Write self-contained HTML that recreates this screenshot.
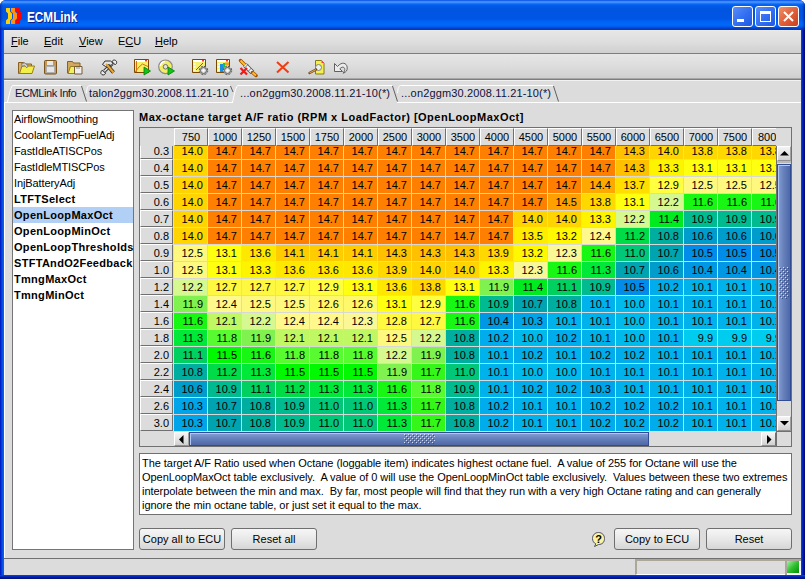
<!DOCTYPE html>
<html><head><meta charset="utf-8">
<style>
*{margin:0;padding:0;box-sizing:border-box}
html,body{width:805px;height:579px;overflow:hidden;background:#fff}
body{position:relative;font-family:"Liberation Sans",sans-serif;font-size:11px;color:#000}
.a{position:absolute}
#frame{position:absolute;left:0;top:0;width:805px;height:579px;background:#0a3fd0;border-radius:6px 6px 0 0;overflow:hidden}
#title{position:absolute;left:0;top:0;width:805px;height:30px;
 background:linear-gradient(#0040d8 0px,#2c80ff 1px,#4a9aff 2px,#2f82ff 3px,#0a68f5 4px,#005ae8 6px,#0054e0 10px,#0056e5 19px,#0064f6 22px,#0068fa 25px,#0058e8 27px,#0040d0 28px,#0038c0 30px)}
#ttext{position:absolute;left:27px;top:9px;font-weight:bold;font-size:14px;color:#fff;text-shadow:1px 1px 0 #0a1e8a;transform:scaleX(0.84);transform-origin:0 0;white-space:nowrap}
.wb{position:absolute;top:6px;width:21px;height:21px;border:1px solid #fff;border-radius:3px;
 background:linear-gradient(135deg,#5a8ef8 0%,#3470f2 50%,#1f58e4 100%)}
#client{position:absolute;left:4px;top:30px;width:797px;height:545px;background:#dcdcdc}
#menubar{position:absolute;left:0;top:0;width:797px;height:24px;background:linear-gradient(#f0ede8 0px,#e6e6e6 1px,#dedede 12px,#cfcfcf 23px,#7d7d7d 23px)}
.mi{position:absolute;top:5px;font-size:11px;line-height:13px}
.mi u{text-decoration:underline;text-underline-offset:1px}
#toolbar{position:absolute;left:0;top:24px;width:797px;height:26px;background:linear-gradient(#e6e6e6 0px,#dddddd 12px,#cfcfcf 24px,#7d7d7d 25px)}
.ic{position:absolute}
#tabs{position:absolute;left:0;top:50px;width:797px;height:23px;background:#dcdcdc}
.tab{position:absolute;top:0;height:23px;white-space:nowrap;font-size:11px}
.list{position:absolute;left:8px;top:80px;width:122px;height:440px;border:1px solid #808080;background:#fff}
.li{position:absolute;left:1px;height:16px;width:120px;line-height:16px;padding-left:1px;white-space:nowrap;letter-spacing:-0.1px}
.li.b{font-weight:bold;letter-spacing:0.3px}
.c{position:absolute;width:33px;height:16px;text-align:right;padding-right:4px;line-height:16px;padding-top:0px;font-size:11px}
.rh{position:absolute;left:140px;width:33px;height:17px;background:#dcdcdc;border-top:1px solid #fff;border-left:1px solid #fff;border-bottom:1px solid #707070;border-right:1px solid #707070;text-align:right;padding-right:3px;line-height:16px}
.ch{position:absolute;top:128px;width:34px;height:18px;background:#dcdcdc;border-top:1px solid #fff;border-left:1px solid #fff;border-bottom:1px solid #707070;border-right:1px solid #707070;text-align:center;line-height:16px}
.tt{line-height:13px;white-space:nowrap;color:#10103a}
.sbb{background:linear-gradient(#f4f4f4,#e0e0e0 60%,#d0d0d0);border-top:1px solid #fff;border-left:1px solid #fff;border-right:1px solid #a0a0a0;border-bottom:1px solid #909090}
.vthumb{background:linear-gradient(90deg,#86a0d4,#6a84be 40%,#4e68a8);border:1px solid #304c94;box-shadow:inset 1px 1px 0 #b0c8f8}
.hthumb{background:linear-gradient(#86a0d4,#6a84be 40%,#4e68a8);border:1px solid #304c94;box-shadow:inset 1px 1px 0 #b0c8f8}
.btn{position:absolute;height:22px;border:1px solid #6f6f6f;border-radius:3px;background:linear-gradient(#f6f6f6,#e8e8e8 50%,#d6d6d6);text-align:center;line-height:20px;font-size:11px;white-space:nowrap}
</style></head><body>
<div id="frame">
 <div id="title">
  <div class="a" style="left:0;top:0;width:4px;height:30px;background:linear-gradient(90deg,rgba(0,0,100,.55),rgba(0,0,100,.25) 1px,rgba(0,0,100,0) 3px)"></div>
  <div class="a" style="left:801px;top:0;width:4px;height:30px;background:linear-gradient(270deg,rgba(0,0,100,.6),rgba(0,0,100,.3) 1px,rgba(0,0,100,0) 3px)"></div>
  <svg class="a" style="left:6px;top:8px" width="17" height="16" viewBox="0 0 17 16"><path d="M0 0h4v3.5l2 2v5l-2 2V16h-4v-3.5l2-2v-5l-2-2z" fill="#ffd000"/><path d="M5 0h4v3.5l2 2v5l-2 2V16h-4v-3.5l2-2v-5l-2-2z" fill="#ff9010"/><path d="M10 0h4v3.5l2 2v5l-2 2V16h-4v-3.5l2-2v-5l-2-2z" fill="#ff0000"/></svg>
  <div id="ttext">ECMLink</div>
  <div class="wb" style="left:732px"><div class="a" style="left:4px;top:12px;width:7px;height:3px;background:#fff"></div></div>
  <div class="wb" style="left:755px"><div class="a" style="left:4px;top:4px;width:11px;height:11px;border:1px solid #fff;border-top-width:3px"></div></div>
  <div class="wb" style="left:778px;background:linear-gradient(135deg,#f0906a 0%,#e0603a 50%,#c8401e 100%)">
   <svg class="a" style="left:4px;top:4px" width="11" height="11" viewBox="0 0 11 11"><path d="M1 1L10 10M10 1L1 10" stroke="#fff" stroke-width="2"/></svg>
  </div>
 </div>
 <div class="a" style="left:0;top:30px;width:4px;height:549px;background:linear-gradient(90deg,#0010b8,#0030d0 1px,#0048e0 2px,#0a5cf2 3px)"></div>
 <div class="a" style="left:801px;top:30px;width:4px;height:549px;background:linear-gradient(90deg,#0846f0,#0032d4 1px,#0018a8 2px,#000a80 3px)"></div>
 <div class="a" style="left:0;top:575px;width:805px;height:4px;background:linear-gradient(#0846ec,#0032d0 1px,#0020b0 2px,#00107e 3px)"></div>
 <div id="client">
  <div id="menubar">
   <div class="mi" style="left:7px"><u>F</u>ile</div>
   <div class="mi" style="left:40px"><u>E</u>dit</div>
   <div class="mi" style="left:75px"><u>V</u>iew</div>
   <div class="mi" style="left:114px">E<u>C</u>U</div>
   <div class="mi" style="left:151px"><u>H</u>elp</div>
  </div>
  <div id="toolbar">
  </div>
<svg class="a" style="left:-4px;top:24px" width="805" height="25" viewBox="0 54 805 25">
 <g stroke-linejoin="round">
 <!-- 1 open folder -->
 <path d="M18.5 62.5h5l1 1.5h7v9.5h-13z" fill="#d8b070" stroke="#8a6020"/>
 <path d="M19.5 73.5L22 66H34.5L32 73.5z" fill="#f2f048" stroke="#9a7a20"/>
 <path d="M21.5 63.5L25 62.8L28.2 66L26.8 67.8L24.3 65.5L22.3 66.5z" fill="#d0d0d0" stroke="#6a6a6a" stroke-width=".8"/>
 <!-- 2 floppy -->
 <rect x="44.5" y="60.5" width="12" height="13.5" rx="1" fill="#c89858" stroke="#7a5418"/>
 <rect x="47" y="61" width="6" height="4" fill="#e8e8e8"/>
 <rect x="46.5" y="66.5" width="8" height="6" fill="#e6e6e6" stroke="#b0b0b0"/>
 <!-- 3 folder+floppy -->
 <path d="M67.5 61.5h5l1 1.5h6.5v10h-12.5z" fill="#d0a860" stroke="#8a6020"/>
 <path d="M68 73.5L70.5 66.5H79L77 73.5z" fill="#f0f060" stroke="#9a7a20"/>
 <rect x="74.5" y="66.5" width="7.5" height="7.5" fill="#eeeeee" stroke="#7a5a30"/>
 <rect x="76" y="67" width="4" height="2" fill="#c0c0c0"/>
 <!-- 4 tools -->
 <path d="M104.5 71L112.5 63.5" stroke="#303030" stroke-width="3.4"/>
 <path d="M104.5 71L112.5 63.5" stroke="#ececec" stroke-width="1.6"/>
 <path d="M102 70.5a2.4 2.4 0 1 0 3.6 2.2l-1.4-.4l-.8-1.4z" fill="#ececec" stroke="#303030"/>
 <path d="M115.5 64.5a2.4 2.4 0 1 0 -3.6 -2.2l1.4.4l.8 1.4z" fill="#ececec" stroke="#303030"/>
 <path d="M107.5 65.5L113.5 72.5" stroke="#4a3008" stroke-width="3.6"/>
 <path d="M107.5 65.5L113.5 72.5" stroke="#e8a838" stroke-width="2"/>
 <path d="M102.5 64.5L105 61H110.5L113 63.2L111 65.5L108.5 64.5L105.5 66.5z" fill="#e4e4e4" stroke="#303030"/>
 <path d="M106 64L108.5 66.5" stroke="#e0a030" stroke-width="2"/>
 <!-- 5 chart play -->
 <rect x="134.5" y="59.5" width="14" height="13" fill="#f6f060" stroke="#7a4800"/>
 <rect x="135" y="60" width="13" height="2" fill="#fff"/>
 <rect x="145" y="60" width="2" height="1.5" fill="#ff3030"/>
 <path d="M136.5 61v11M135 72L139 67L142.5 64L148 66.5" stroke="#d87010" fill="none"/>
 <path d="M144 67L150.5 71L144 75z" fill="#10c418" stroke="#0a7a0a" stroke-width=".8"/>
 <!-- 6 cd play -->
 <circle cx="165.5" cy="66.8" r="6.8" fill="#f2ee60" stroke="#8a8a8a" stroke-width="1.2"/>
 <path d="M160.5 66A5 5 0 0 1 165 61.5" stroke="#ffffff" stroke-width="1.5" fill="none"/>
 <circle cx="165.5" cy="66.8" r="2.3" fill="#e0e0e0" stroke="#707070"/>
 <path d="M168 67L174.5 71L168 75z" fill="#10c418" stroke="#0a7a0a" stroke-width=".8"/>
 <!-- 7 chart gear -->
 <rect x="192.5" y="59.5" width="13" height="13" fill="#f6f070" stroke="#7a4800"/>
 <rect x="193" y="60" width="12" height="2" fill="#fff"/>
 <rect x="202" y="60" width="2" height="1.5" fill="#ff3030"/>
 <path d="M193.5 64h2M193.5 67h2M193.5 70h2" stroke="#fff" stroke-width="1.5"/>
 <path d="M196 70L199 67L203 63" stroke="#ff2020" fill="none"/>
 <circle cx="203.5" cy="70.5" r="4.2" fill="#c8c8c8" stroke="#505050" stroke-dasharray="2 1.3"/>
 <circle cx="203.5" cy="70.5" r="3" fill="#d8d8d8" stroke="#606060"/>
 <circle cx="203.5" cy="70.5" r="1.2" fill="#fff"/>
 <!-- 8 color chart gear -->
 <rect x="216.5" y="59.5" width="13" height="13" fill="#f6f070" stroke="#7a4800"/>
 <rect x="217" y="60" width="12" height="2" fill="#fff"/>
 <rect x="226" y="60" width="2" height="1.5" fill="#ff3030"/>
 <path d="M217.5 64h2M217.5 67h2M217.5 70h2" stroke="#fff" stroke-width="1.5"/>
 <rect x="220" y="64" width="3" height="8" fill="#1890e0"/>
 <rect x="223" y="63" width="2" height="7" fill="#20c040"/>
 <rect x="225" y="62.5" width="4" height="3" fill="#f0a020"/>
 <circle cx="227.5" cy="70.5" r="4.2" fill="#c8c8c8" stroke="#505050" stroke-dasharray="2 1.3"/>
 <circle cx="227.5" cy="70.5" r="3" fill="#d8d8d8" stroke="#606060"/>
 <circle cx="227.5" cy="70.5" r="1.2" fill="#fff"/>
 <!-- 9 cable -->
 <path d="M240.5 60.5L245 65" stroke="#a05000" stroke-width="3.5" stroke-linecap="round"/>
 <path d="M240.5 60.5L245 65" stroke="#ffc020" stroke-width="2"/>
 <path d="M245 65L252.5 72.5" stroke="#505050" stroke-width="5"/>
 <path d="M245 65L252.5 72.5" stroke="#f4f4f4" stroke-width="3.2"/>
 <path d="M248 64.5L244.5 68M251.5 68L248 71.5" stroke="#707070" stroke-width="1"/>
 <path d="M252.5 72.5L256 75.5" stroke="#a05000" stroke-width="3.5" stroke-linecap="round"/>
 <path d="M252.5 72.5L256 75.5" stroke="#ffc020" stroke-width="2"/>
 <path d="M240.5 68L247 74.5M247 68L240.5 74.5" stroke="#f01818" stroke-width="2.2"/>
 <!-- 10 red X -->
 <path d="M277 62L288.5 72.5M288.5 62L277 72.5" stroke="#f03c10" stroke-width="2"/>
 <!-- 11 doc magnifier -->
 <path d="M315.5 60.5h6l2.5 2.5v11h-8.5z" fill="#f4f050" stroke="#8a7a10"/>
 <path d="M321.5 60.5l2.5 2.5h-2.5z" fill="#ff4040"/>
 <circle cx="318.5" cy="67.5" r="3" fill="#e8f0f0" stroke="#808080"/>
 <path d="M316 69.5L309.5 73" stroke="#704010" stroke-width="2.4" stroke-linecap="round"/>
 <path d="M316 69.5L309.5 73" stroke="#d8a050" stroke-width="1.2"/>
 <!-- 12 undo -->
 <path d="M334.5 63.5V71.5H342.5L339.8 68.8C341.5 66.8 343.8 66.5 344.6 68.3C345.3 70 344.3 71.8 343 73.2C346 72.6 347.6 70.2 347.2 67.2C346.6 63 342 61.2 337.5 66.5z" fill="#ececec" stroke="#606060"/>
 </g>
</svg>
  <div id="tabs">
  </div>
 </div>
<!-- tabs -->
 <div class="a" style="left:4px;top:80px;width:797px;height:1px;background:#f2f2f2"></div>
 <svg class="a" style="left:0;top:80px" width="805" height="24" viewBox="0 80 805 24" fill="none">
  <path d="M4 102.5H233M397 102.5H801" stroke="#fff"/>
  <path d="M7.5 102C9 96 10 89 12.5 85.5H81" stroke="#fff"/>
  <path d="M81.5 86L86.5 101.5" stroke="#606060"/>
  <path d="M86.5 93C87 88 87.5 86 89.5 85.5H230" stroke="#fff"/>
  <path d="M230.5 86L233 92" stroke="#606060"/>
  <path d="M232.5 102.5C234 96 235 89 237.5 85.5H392" stroke="#fff"/>
  <path d="M392.5 86L397.5 101.5" stroke="#606060"/>
  <path d="M397.5 93C398 88 398.5 86 400.5 85.5H553" stroke="#fff"/>
  <path d="M553.5 86L558.5 101.5" stroke="#606060"/>
 </svg>
 <div class="a tt" style="left:15px;top:87px;letter-spacing:-0.4px">ECMLink Info</div>
 <div class="a tt" style="left:89px;top:87px;letter-spacing:0.12px">talon2ggm30.2008.11.21-10</div>
 <div class="a tt" style="left:240px;top:87px;letter-spacing:0.15px">...on2ggm30.2008.11.21-10(*)</div>
 <div class="a tt" style="left:401px;top:87px;letter-spacing:0.15px">...on2ggm30.2008.11.21-10(*)</div>
 <!-- content, absolute page coords -->
 <div class="a" style="left:4px;top:103px;width:797px;height:455px;background:#dcdcdc"></div>
 <div class="a" style="left:4px;top:102px;width:1px;height:456px;background:#fff"></div>
 <div class="a" style="left:12px;top:110px;width:122px;height:440px;border:1px solid #757575;background:#fff"></div>
 <div class="a" style="left:12px;top:111px;width:121px">
  <div class="li" style="top:0">AirflowSmoothing</div>
  <div class="li" style="top:16px">CoolantTempFuelAdj</div>
  <div class="li" style="top:32px">FastIdleATISCPos</div>
  <div class="li" style="top:48px">FastIdleMTISCPos</div>
  <div class="li" style="top:64px">InjBatteryAdj</div>
  <div class="li b" style="top:80px">LTFTSelect</div>
  <div class="li b" style="top:96px;background:#b2d0f6">OpenLoopMaxOct</div>
  <div class="li b" style="top:112px">OpenLoopMinOct</div>
  <div class="li b" style="top:128px">OpenLoopThresholds</div>
  <div class="li b" style="top:144px">STFTAndO2Feedback</div>
  <div class="li b" style="top:160px">TmngMaxOct</div>
  <div class="li b" style="top:176px">TmngMinOct</div>
 </div>
 <div class="a" style="left:139px;top:111px;font-weight:bold;letter-spacing:0.5px;white-space:nowrap">Max-octane target A/F ratio (RPM x LoadFactor) [OpenLoopMaxOct]</div>
 <!-- grid -->
 <div class="a" style="left:139px;top:127px;width:653px;height:320px;border:1px solid #707070;background:#dcdcdc"></div>
 <div class="a" style="left:140px;top:146px;width:1px;height:285px;background:#fff"></div>
 <div class="a" style="left:174px;top:146px;width:602px;height:285px;background:#d8d8d8;overflow:hidden">
  <div class="a" style="left:-174px;top:-146px;width:805px;height:579px">
<div class="c" style="left:174px;top:143px;background:#ffd400">14.0</div>
<div class="c" style="left:208px;top:143px;background:#ff8000">14.7</div>
<div class="c" style="left:242px;top:143px;background:#ff8000">14.7</div>
<div class="c" style="left:276px;top:143px;background:#ff8000">14.7</div>
<div class="c" style="left:310px;top:143px;background:#ff8000">14.7</div>
<div class="c" style="left:344px;top:143px;background:#ff8000">14.7</div>
<div class="c" style="left:378px;top:143px;background:#ff8000">14.7</div>
<div class="c" style="left:412px;top:143px;background:#ff8000">14.7</div>
<div class="c" style="left:446px;top:143px;background:#ff8000">14.7</div>
<div class="c" style="left:480px;top:143px;background:#ff8000">14.7</div>
<div class="c" style="left:514px;top:143px;background:#ff8000">14.7</div>
<div class="c" style="left:548px;top:143px;background:#ff8000">14.7</div>
<div class="c" style="left:582px;top:143px;background:#ff8000">14.7</div>
<div class="c" style="left:616px;top:143px;background:#ffc000">14.3</div>
<div class="c" style="left:650px;top:143px;background:#ffd400">14.0</div>
<div class="c" style="left:684px;top:143px;background:#ffd800">13.8</div>
<div class="c" style="left:718px;top:143px;background:#ffd800">13.8</div>
<div class="c" style="left:752px;top:143px;background:#ffd800">13.8</div>
<div class="c" style="left:174px;top:160px;background:#ffd400">14.0</div>
<div class="c" style="left:208px;top:160px;background:#ff8000">14.7</div>
<div class="c" style="left:242px;top:160px;background:#ff8000">14.7</div>
<div class="c" style="left:276px;top:160px;background:#ff8000">14.7</div>
<div class="c" style="left:310px;top:160px;background:#ff8000">14.7</div>
<div class="c" style="left:344px;top:160px;background:#ff8000">14.7</div>
<div class="c" style="left:378px;top:160px;background:#ff8000">14.7</div>
<div class="c" style="left:412px;top:160px;background:#ff8000">14.7</div>
<div class="c" style="left:446px;top:160px;background:#ff8000">14.7</div>
<div class="c" style="left:480px;top:160px;background:#ff8000">14.7</div>
<div class="c" style="left:514px;top:160px;background:#ff8000">14.7</div>
<div class="c" style="left:548px;top:160px;background:#ff8000">14.7</div>
<div class="c" style="left:582px;top:160px;background:#ff8000">14.7</div>
<div class="c" style="left:616px;top:160px;background:#ffc000">14.3</div>
<div class="c" style="left:650px;top:160px;background:#fff400">13.3</div>
<div class="c" style="left:684px;top:160px;background:#ffff10">13.1</div>
<div class="c" style="left:718px;top:160px;background:#ffff10">13.1</div>
<div class="c" style="left:752px;top:160px;background:#ffff10">13.1</div>
<div class="c" style="left:174px;top:177px;background:#ffd400">14.0</div>
<div class="c" style="left:208px;top:177px;background:#ff8000">14.7</div>
<div class="c" style="left:242px;top:177px;background:#ff8000">14.7</div>
<div class="c" style="left:276px;top:177px;background:#ff8000">14.7</div>
<div class="c" style="left:310px;top:177px;background:#ff8000">14.7</div>
<div class="c" style="left:344px;top:177px;background:#ff8000">14.7</div>
<div class="c" style="left:378px;top:177px;background:#ff8000">14.7</div>
<div class="c" style="left:412px;top:177px;background:#ff8000">14.7</div>
<div class="c" style="left:446px;top:177px;background:#ff8000">14.7</div>
<div class="c" style="left:480px;top:177px;background:#ff8000">14.7</div>
<div class="c" style="left:514px;top:177px;background:#ff8000">14.7</div>
<div class="c" style="left:548px;top:177px;background:#ff8000">14.7</div>
<div class="c" style="left:582px;top:177px;background:#ffa800">14.4</div>
<div class="c" style="left:616px;top:177px;background:#ffde00">13.7</div>
<div class="c" style="left:650px;top:177px;background:#ffff40">12.9</div>
<div class="c" style="left:684px;top:177px;background:#fff87e">12.5</div>
<div class="c" style="left:718px;top:177px;background:#fff87e">12.5</div>
<div class="c" style="left:752px;top:177px;background:#fff87e">12.5</div>
<div class="c" style="left:174px;top:194px;background:#ffd400">14.0</div>
<div class="c" style="left:208px;top:194px;background:#ff8000">14.7</div>
<div class="c" style="left:242px;top:194px;background:#ff8000">14.7</div>
<div class="c" style="left:276px;top:194px;background:#ff8000">14.7</div>
<div class="c" style="left:310px;top:194px;background:#ff8000">14.7</div>
<div class="c" style="left:344px;top:194px;background:#ff8000">14.7</div>
<div class="c" style="left:378px;top:194px;background:#ff8000">14.7</div>
<div class="c" style="left:412px;top:194px;background:#ff8000">14.7</div>
<div class="c" style="left:446px;top:194px;background:#ff8000">14.7</div>
<div class="c" style="left:480px;top:194px;background:#ff8000">14.7</div>
<div class="c" style="left:514px;top:194px;background:#ff8000">14.7</div>
<div class="c" style="left:548px;top:194px;background:#ffa000">14.5</div>
<div class="c" style="left:582px;top:194px;background:#ffd800">13.8</div>
<div class="c" style="left:616px;top:194px;background:#ffff10">13.1</div>
<div class="c" style="left:650px;top:194px;background:#d6f890">12.2</div>
<div class="c" style="left:684px;top:194px;background:#18f614">11.6</div>
<div class="c" style="left:718px;top:194px;background:#18f614">11.6</div>
<div class="c" style="left:752px;top:194px;background:#18f614">11.6</div>
<div class="c" style="left:174px;top:211px;background:#ffd400">14.0</div>
<div class="c" style="left:208px;top:211px;background:#ff8000">14.7</div>
<div class="c" style="left:242px;top:211px;background:#ff8000">14.7</div>
<div class="c" style="left:276px;top:211px;background:#ff8000">14.7</div>
<div class="c" style="left:310px;top:211px;background:#ff8000">14.7</div>
<div class="c" style="left:344px;top:211px;background:#ff8000">14.7</div>
<div class="c" style="left:378px;top:211px;background:#ff8000">14.7</div>
<div class="c" style="left:412px;top:211px;background:#ff8000">14.7</div>
<div class="c" style="left:446px;top:211px;background:#ff8000">14.7</div>
<div class="c" style="left:480px;top:211px;background:#ff8000">14.7</div>
<div class="c" style="left:514px;top:211px;background:#ffd400">14.0</div>
<div class="c" style="left:548px;top:211px;background:#ffd400">14.0</div>
<div class="c" style="left:582px;top:211px;background:#fff400">13.3</div>
<div class="c" style="left:616px;top:211px;background:#d6f890">12.2</div>
<div class="c" style="left:650px;top:211px;background:#00ea20">11.4</div>
<div class="c" style="left:684px;top:211px;background:#00ba90">10.9</div>
<div class="c" style="left:718px;top:211px;background:#00ba90">10.9</div>
<div class="c" style="left:752px;top:211px;background:#00ba90">10.9</div>
<div class="c" style="left:174px;top:228px;background:#ffd400">14.0</div>
<div class="c" style="left:208px;top:228px;background:#ff8000">14.7</div>
<div class="c" style="left:242px;top:228px;background:#ff8000">14.7</div>
<div class="c" style="left:276px;top:228px;background:#ff8000">14.7</div>
<div class="c" style="left:310px;top:228px;background:#ff8000">14.7</div>
<div class="c" style="left:344px;top:228px;background:#ff8000">14.7</div>
<div class="c" style="left:378px;top:228px;background:#ff8000">14.7</div>
<div class="c" style="left:412px;top:228px;background:#ff8000">14.7</div>
<div class="c" style="left:446px;top:228px;background:#ff8000">14.7</div>
<div class="c" style="left:480px;top:228px;background:#ff8000">14.7</div>
<div class="c" style="left:514px;top:228px;background:#ffec00">13.5</div>
<div class="c" style="left:548px;top:228px;background:#fff800">13.2</div>
<div class="c" style="left:582px;top:228px;background:#fff88c">12.4</div>
<div class="c" style="left:616px;top:228px;background:#00dc48">11.2</div>
<div class="c" style="left:650px;top:228px;background:#00aea0">10.8</div>
<div class="c" style="left:684px;top:228px;background:#009ccc">10.6</div>
<div class="c" style="left:718px;top:228px;background:#009ccc">10.6</div>
<div class="c" style="left:752px;top:228px;background:#009ccc">10.6</div>
<div class="c" style="left:174px;top:245px;background:#fff87e">12.5</div>
<div class="c" style="left:208px;top:245px;background:#ffff10">13.1</div>
<div class="c" style="left:242px;top:245px;background:#ffe800">13.6</div>
<div class="c" style="left:276px;top:245px;background:#ffcc00">14.1</div>
<div class="c" style="left:310px;top:245px;background:#ffcc00">14.1</div>
<div class="c" style="left:344px;top:245px;background:#ffcc00">14.1</div>
<div class="c" style="left:378px;top:245px;background:#ffc000">14.3</div>
<div class="c" style="left:412px;top:245px;background:#ffc000">14.3</div>
<div class="c" style="left:446px;top:245px;background:#ffc000">14.3</div>
<div class="c" style="left:480px;top:245px;background:#ffd800">13.9</div>
<div class="c" style="left:514px;top:245px;background:#fff800">13.2</div>
<div class="c" style="left:548px;top:245px;background:#faf896">12.3</div>
<div class="c" style="left:582px;top:245px;background:#18f614">11.6</div>
<div class="c" style="left:616px;top:245px;background:#00c878">11.0</div>
<div class="c" style="left:650px;top:245px;background:#00a4b0">10.7</div>
<div class="c" style="left:684px;top:245px;background:#008ce8">10.5</div>
<div class="c" style="left:718px;top:245px;background:#008ce8">10.5</div>
<div class="c" style="left:752px;top:245px;background:#008ce8">10.5</div>
<div class="c" style="left:174px;top:262px;background:#fff87e">12.5</div>
<div class="c" style="left:208px;top:262px;background:#ffff10">13.1</div>
<div class="c" style="left:242px;top:262px;background:#fff400">13.3</div>
<div class="c" style="left:276px;top:262px;background:#ffe800">13.6</div>
<div class="c" style="left:310px;top:262px;background:#ffe800">13.6</div>
<div class="c" style="left:344px;top:262px;background:#ffe800">13.6</div>
<div class="c" style="left:378px;top:262px;background:#ffd800">13.9</div>
<div class="c" style="left:412px;top:262px;background:#ffd400">14.0</div>
<div class="c" style="left:446px;top:262px;background:#ffd400">14.0</div>
<div class="c" style="left:480px;top:262px;background:#fff400">13.3</div>
<div class="c" style="left:514px;top:262px;background:#faf896">12.3</div>
<div class="c" style="left:548px;top:262px;background:#18f614">11.6</div>
<div class="c" style="left:582px;top:262px;background:#00e838">11.3</div>
<div class="c" style="left:616px;top:262px;background:#00a4b0">10.7</div>
<div class="c" style="left:650px;top:262px;background:#009ccc">10.6</div>
<div class="c" style="left:684px;top:262px;background:#0098e4">10.4</div>
<div class="c" style="left:718px;top:262px;background:#0098e4">10.4</div>
<div class="c" style="left:752px;top:262px;background:#0098e4">10.4</div>
<div class="c" style="left:174px;top:279px;background:#d6f890">12.2</div>
<div class="c" style="left:208px;top:279px;background:#fff840">12.7</div>
<div class="c" style="left:242px;top:279px;background:#fff840">12.7</div>
<div class="c" style="left:276px;top:279px;background:#fff840">12.7</div>
<div class="c" style="left:310px;top:279px;background:#ffff40">12.9</div>
<div class="c" style="left:344px;top:279px;background:#ffff10">13.1</div>
<div class="c" style="left:378px;top:279px;background:#ffe800">13.6</div>
<div class="c" style="left:412px;top:279px;background:#ffd800">13.8</div>
<div class="c" style="left:446px;top:279px;background:#ffff10">13.1</div>
<div class="c" style="left:480px;top:279px;background:#80f250">11.9</div>
<div class="c" style="left:514px;top:279px;background:#00ea20">11.4</div>
<div class="c" style="left:548px;top:279px;background:#00d060">11.1</div>
<div class="c" style="left:582px;top:279px;background:#00ba90">10.9</div>
<div class="c" style="left:616px;top:279px;background:#008ce8">10.5</div>
<div class="c" style="left:650px;top:279px;background:#00acec">10.2</div>
<div class="c" style="left:684px;top:279px;background:#00b2ec">10.1</div>
<div class="c" style="left:718px;top:279px;background:#00b2ec">10.1</div>
<div class="c" style="left:752px;top:279px;background:#00b2ec">10.1</div>
<div class="c" style="left:174px;top:296px;background:#80f250">11.9</div>
<div class="c" style="left:208px;top:296px;background:#fff88c">12.4</div>
<div class="c" style="left:242px;top:296px;background:#fff87e">12.5</div>
<div class="c" style="left:276px;top:296px;background:#fff87e">12.5</div>
<div class="c" style="left:310px;top:296px;background:#fff86a">12.6</div>
<div class="c" style="left:344px;top:296px;background:#fff86a">12.6</div>
<div class="c" style="left:378px;top:296px;background:#ffff10">13.1</div>
<div class="c" style="left:412px;top:296px;background:#ffff40">12.9</div>
<div class="c" style="left:446px;top:296px;background:#18f614">11.6</div>
<div class="c" style="left:480px;top:296px;background:#00ba90">10.9</div>
<div class="c" style="left:514px;top:296px;background:#00a4b0">10.7</div>
<div class="c" style="left:548px;top:296px;background:#00aea0">10.8</div>
<div class="c" style="left:582px;top:296px;background:#00b2ec">10.1</div>
<div class="c" style="left:616px;top:296px;background:#00baec">10.0</div>
<div class="c" style="left:650px;top:296px;background:#00b2ec">10.1</div>
<div class="c" style="left:684px;top:296px;background:#00b2ec">10.1</div>
<div class="c" style="left:718px;top:296px;background:#00b2ec">10.1</div>
<div class="c" style="left:752px;top:296px;background:#00b2ec">10.1</div>
<div class="c" style="left:174px;top:313px;background:#18f614">11.6</div>
<div class="c" style="left:208px;top:313px;background:#c0f864">12.1</div>
<div class="c" style="left:242px;top:313px;background:#d6f890">12.2</div>
<div class="c" style="left:276px;top:313px;background:#fff88c">12.4</div>
<div class="c" style="left:310px;top:313px;background:#fff88c">12.4</div>
<div class="c" style="left:344px;top:313px;background:#faf896">12.3</div>
<div class="c" style="left:378px;top:313px;background:#fffa40">12.8</div>
<div class="c" style="left:412px;top:313px;background:#fff840">12.7</div>
<div class="c" style="left:446px;top:313px;background:#18f614">11.6</div>
<div class="c" style="left:480px;top:313px;background:#0098e4">10.4</div>
<div class="c" style="left:514px;top:313px;background:#00a4e8">10.3</div>
<div class="c" style="left:548px;top:313px;background:#00b2ec">10.1</div>
<div class="c" style="left:582px;top:313px;background:#00b2ec">10.1</div>
<div class="c" style="left:616px;top:313px;background:#00baec">10.0</div>
<div class="c" style="left:650px;top:313px;background:#00b2ec">10.1</div>
<div class="c" style="left:684px;top:313px;background:#00b2ec">10.1</div>
<div class="c" style="left:718px;top:313px;background:#00b2ec">10.1</div>
<div class="c" style="left:752px;top:313px;background:#00b2ec">10.1</div>
<div class="c" style="left:174px;top:330px;background:#00e838">11.3</div>
<div class="c" style="left:208px;top:330px;background:#58fa30">11.8</div>
<div class="c" style="left:242px;top:330px;background:#80f250">11.9</div>
<div class="c" style="left:276px;top:330px;background:#c0f864">12.1</div>
<div class="c" style="left:310px;top:330px;background:#c0f864">12.1</div>
<div class="c" style="left:344px;top:330px;background:#c0f864">12.1</div>
<div class="c" style="left:378px;top:330px;background:#fff87e">12.5</div>
<div class="c" style="left:412px;top:330px;background:#d6f890">12.2</div>
<div class="c" style="left:446px;top:330px;background:#00aea0">10.8</div>
<div class="c" style="left:480px;top:330px;background:#00acec">10.2</div>
<div class="c" style="left:514px;top:330px;background:#00baec">10.0</div>
<div class="c" style="left:548px;top:330px;background:#00acec">10.2</div>
<div class="c" style="left:582px;top:330px;background:#00b2ec">10.1</div>
<div class="c" style="left:616px;top:330px;background:#00baec">10.0</div>
<div class="c" style="left:650px;top:330px;background:#00b2ec">10.1</div>
<div class="c" style="left:684px;top:330px;background:#00ccf0">9.9</div>
<div class="c" style="left:718px;top:330px;background:#00ccf0">9.9</div>
<div class="c" style="left:752px;top:330px;background:#00ccf0">9.9</div>
<div class="c" style="left:174px;top:347px;background:#00d060">11.1</div>
<div class="c" style="left:208px;top:347px;background:#00f800">11.5</div>
<div class="c" style="left:242px;top:347px;background:#18f614">11.6</div>
<div class="c" style="left:276px;top:347px;background:#58fa30">11.8</div>
<div class="c" style="left:310px;top:347px;background:#58fa30">11.8</div>
<div class="c" style="left:344px;top:347px;background:#58fa30">11.8</div>
<div class="c" style="left:378px;top:347px;background:#d6f890">12.2</div>
<div class="c" style="left:412px;top:347px;background:#80f250">11.9</div>
<div class="c" style="left:446px;top:347px;background:#00aea0">10.8</div>
<div class="c" style="left:480px;top:347px;background:#00b2ec">10.1</div>
<div class="c" style="left:514px;top:347px;background:#00acec">10.2</div>
<div class="c" style="left:548px;top:347px;background:#00b2ec">10.1</div>
<div class="c" style="left:582px;top:347px;background:#00acec">10.2</div>
<div class="c" style="left:616px;top:347px;background:#00acec">10.2</div>
<div class="c" style="left:650px;top:347px;background:#00b2ec">10.1</div>
<div class="c" style="left:684px;top:347px;background:#00b2ec">10.1</div>
<div class="c" style="left:718px;top:347px;background:#00b2ec">10.1</div>
<div class="c" style="left:752px;top:347px;background:#00b2ec">10.1</div>
<div class="c" style="left:174px;top:364px;background:#00aea0">10.8</div>
<div class="c" style="left:208px;top:364px;background:#00dc48">11.2</div>
<div class="c" style="left:242px;top:364px;background:#00e838">11.3</div>
<div class="c" style="left:276px;top:364px;background:#00f800">11.5</div>
<div class="c" style="left:310px;top:364px;background:#00f800">11.5</div>
<div class="c" style="left:344px;top:364px;background:#00f800">11.5</div>
<div class="c" style="left:378px;top:364px;background:#80f250">11.9</div>
<div class="c" style="left:412px;top:364px;background:#34f618">11.7</div>
<div class="c" style="left:446px;top:364px;background:#00c878">11.0</div>
<div class="c" style="left:480px;top:364px;background:#00b2ec">10.1</div>
<div class="c" style="left:514px;top:364px;background:#00baec">10.0</div>
<div class="c" style="left:548px;top:364px;background:#00baec">10.0</div>
<div class="c" style="left:582px;top:364px;background:#00b2ec">10.1</div>
<div class="c" style="left:616px;top:364px;background:#00b2ec">10.1</div>
<div class="c" style="left:650px;top:364px;background:#00b2ec">10.1</div>
<div class="c" style="left:684px;top:364px;background:#00b2ec">10.1</div>
<div class="c" style="left:718px;top:364px;background:#00b2ec">10.1</div>
<div class="c" style="left:752px;top:364px;background:#00b2ec">10.1</div>
<div class="c" style="left:174px;top:381px;background:#009ccc">10.6</div>
<div class="c" style="left:208px;top:381px;background:#00ba90">10.9</div>
<div class="c" style="left:242px;top:381px;background:#00d060">11.1</div>
<div class="c" style="left:276px;top:381px;background:#00dc48">11.2</div>
<div class="c" style="left:310px;top:381px;background:#00e838">11.3</div>
<div class="c" style="left:344px;top:381px;background:#00e838">11.3</div>
<div class="c" style="left:378px;top:381px;background:#18f614">11.6</div>
<div class="c" style="left:412px;top:381px;background:#58fa30">11.8</div>
<div class="c" style="left:446px;top:381px;background:#00ba90">10.9</div>
<div class="c" style="left:480px;top:381px;background:#00b2ec">10.1</div>
<div class="c" style="left:514px;top:381px;background:#00acec">10.2</div>
<div class="c" style="left:548px;top:381px;background:#00acec">10.2</div>
<div class="c" style="left:582px;top:381px;background:#00a4e8">10.3</div>
<div class="c" style="left:616px;top:381px;background:#00b2ec">10.1</div>
<div class="c" style="left:650px;top:381px;background:#00b2ec">10.1</div>
<div class="c" style="left:684px;top:381px;background:#00b2ec">10.1</div>
<div class="c" style="left:718px;top:381px;background:#00b2ec">10.1</div>
<div class="c" style="left:752px;top:381px;background:#00b2ec">10.1</div>
<div class="c" style="left:174px;top:398px;background:#00a4e8">10.3</div>
<div class="c" style="left:208px;top:398px;background:#00a4b0">10.7</div>
<div class="c" style="left:242px;top:398px;background:#00aea0">10.8</div>
<div class="c" style="left:276px;top:398px;background:#00ba90">10.9</div>
<div class="c" style="left:310px;top:398px;background:#00c878">11.0</div>
<div class="c" style="left:344px;top:398px;background:#00c878">11.0</div>
<div class="c" style="left:378px;top:398px;background:#00e838">11.3</div>
<div class="c" style="left:412px;top:398px;background:#34f618">11.7</div>
<div class="c" style="left:446px;top:398px;background:#00aea0">10.8</div>
<div class="c" style="left:480px;top:398px;background:#00acec">10.2</div>
<div class="c" style="left:514px;top:398px;background:#00b2ec">10.1</div>
<div class="c" style="left:548px;top:398px;background:#00b2ec">10.1</div>
<div class="c" style="left:582px;top:398px;background:#00acec">10.2</div>
<div class="c" style="left:616px;top:398px;background:#00acec">10.2</div>
<div class="c" style="left:650px;top:398px;background:#00acec">10.2</div>
<div class="c" style="left:684px;top:398px;background:#00b2ec">10.1</div>
<div class="c" style="left:718px;top:398px;background:#00b2ec">10.1</div>
<div class="c" style="left:752px;top:398px;background:#00b2ec">10.1</div>
<div class="c" style="left:174px;top:415px;background:#00a4e8">10.3</div>
<div class="c" style="left:208px;top:415px;background:#00a4b0">10.7</div>
<div class="c" style="left:242px;top:415px;background:#00aea0">10.8</div>
<div class="c" style="left:276px;top:415px;background:#00ba90">10.9</div>
<div class="c" style="left:310px;top:415px;background:#00c878">11.0</div>
<div class="c" style="left:344px;top:415px;background:#00c878">11.0</div>
<div class="c" style="left:378px;top:415px;background:#00e838">11.3</div>
<div class="c" style="left:412px;top:415px;background:#34f618">11.7</div>
<div class="c" style="left:446px;top:415px;background:#00aea0">10.8</div>
<div class="c" style="left:480px;top:415px;background:#00acec">10.2</div>
<div class="c" style="left:514px;top:415px;background:#00b2ec">10.1</div>
<div class="c" style="left:548px;top:415px;background:#00b2ec">10.1</div>
<div class="c" style="left:582px;top:415px;background:#00acec">10.2</div>
<div class="c" style="left:616px;top:415px;background:#00acec">10.2</div>
<div class="c" style="left:650px;top:415px;background:#00acec">10.2</div>
<div class="c" style="left:684px;top:415px;background:#00b2ec">10.1</div>
<div class="c" style="left:718px;top:415px;background:#00b2ec">10.1</div>
<div class="c" style="left:752px;top:415px;background:#00b2ec">10.1</div>
  </div>
 </div>
 <div class="a" style="left:140px;top:146px;width:34px;height:285px;overflow:hidden">
  <div class="a" style="left:-140px;top:-146px;width:805px;height:579px">
<div class="rh" style="top:142px">0.3</div>
<div class="rh" style="top:159px">0.4</div>
<div class="rh" style="top:176px">0.5</div>
<div class="rh" style="top:193px">0.6</div>
<div class="rh" style="top:210px">0.7</div>
<div class="rh" style="top:227px">0.8</div>
<div class="rh" style="top:244px">0.9</div>
<div class="rh" style="top:261px">1.0</div>
<div class="rh" style="top:278px">1.2</div>
<div class="rh" style="top:295px">1.4</div>
<div class="rh" style="top:312px">1.6</div>
<div class="rh" style="top:329px">1.8</div>
<div class="rh" style="top:346px">2.0</div>
<div class="rh" style="top:363px">2.2</div>
<div class="rh" style="top:380px">2.4</div>
<div class="rh" style="top:397px">2.6</div>
<div class="rh" style="top:414px">3.0</div>
  </div>
 </div>
 <div class="a" style="left:140px;top:128px;width:636px;height:18px;overflow:hidden">
  <div class="a" style="left:-140px;top:-128px;width:805px;height:579px">
<div class="ch" style="left:174px">750</div>
<div class="ch" style="left:208px">1000</div>
<div class="ch" style="left:242px">1250</div>
<div class="ch" style="left:276px">1500</div>
<div class="ch" style="left:310px">1750</div>
<div class="ch" style="left:344px">2000</div>
<div class="ch" style="left:378px">2500</div>
<div class="ch" style="left:412px">3000</div>
<div class="ch" style="left:446px">3500</div>
<div class="ch" style="left:480px">4000</div>
<div class="ch" style="left:514px">4500</div>
<div class="ch" style="left:548px">5000</div>
<div class="ch" style="left:582px">5500</div>
<div class="ch" style="left:616px">6000</div>
<div class="ch" style="left:650px">6500</div>
<div class="ch" style="left:684px">7000</div>
<div class="ch" style="left:718px">7500</div>
<div class="ch" style="left:752px;text-align:left;padding-left:5px">800</div>
  </div>
 </div>
<!-- scrollbars -->
 <div class="a" style="left:776px;top:146px;width:15px;height:300px;background:#dcdcdc;border-left:1px solid #707070"></div>
 <div class="a sbb" style="left:777px;top:146px;width:14px;height:15px"><svg class="a" style="left:2px;top:4px" width="9" height="5"><path d="M0 4.5L4.5 0L9 4.5z" fill="#000"/></svg></div>
 <div class="a" style="left:777px;top:161px;width:14px;height:2px;background:#b8b8b8"></div>
 <div class="a vthumb" style="left:777px;top:164px;width:14px;height:237px"></div>
 <svg class="a" style="left:779px;top:267px" width="11" height="32">
  <g fill="#3a4e88"><rect x="1" y="1" width="1" height="1"/><rect x="5" y="1" width="1" height="1"/><rect x="9" y="1" width="1" height="1"/><rect x="3" y="3" width="1" height="1"/><rect x="7" y="3" width="1" height="1"/><rect x="1" y="5" width="1" height="1"/><rect x="5" y="5" width="1" height="1"/><rect x="9" y="5" width="1" height="1"/><rect x="3" y="7" width="1" height="1"/><rect x="7" y="7" width="1" height="1"/><rect x="1" y="9" width="1" height="1"/><rect x="5" y="9" width="1" height="1"/><rect x="9" y="9" width="1" height="1"/><rect x="3" y="11" width="1" height="1"/><rect x="7" y="11" width="1" height="1"/><rect x="1" y="13" width="1" height="1"/><rect x="5" y="13" width="1" height="1"/><rect x="9" y="13" width="1" height="1"/><rect x="3" y="15" width="1" height="1"/><rect x="7" y="15" width="1" height="1"/><rect x="1" y="17" width="1" height="1"/><rect x="5" y="17" width="1" height="1"/><rect x="9" y="17" width="1" height="1"/><rect x="3" y="19" width="1" height="1"/><rect x="7" y="19" width="1" height="1"/><rect x="1" y="21" width="1" height="1"/><rect x="5" y="21" width="1" height="1"/><rect x="9" y="21" width="1" height="1"/><rect x="3" y="23" width="1" height="1"/><rect x="7" y="23" width="1" height="1"/><rect x="1" y="25" width="1" height="1"/><rect x="5" y="25" width="1" height="1"/><rect x="9" y="25" width="1" height="1"/><rect x="3" y="27" width="1" height="1"/><rect x="7" y="27" width="1" height="1"/><rect x="1" y="29" width="1" height="1"/><rect x="5" y="29" width="1" height="1"/><rect x="9" y="29" width="1" height="1"/><rect x="3" y="31" width="1" height="1"/><rect x="7" y="31" width="1" height="1"/></g>
  <g fill="#d0dcf8"><rect x="0" y="0" width="1" height="1"/><rect x="4" y="0" width="1" height="1"/><rect x="8" y="0" width="1" height="1"/><rect x="2" y="2" width="1" height="1"/><rect x="6" y="2" width="1" height="1"/><rect x="0" y="4" width="1" height="1"/><rect x="4" y="4" width="1" height="1"/><rect x="8" y="4" width="1" height="1"/><rect x="2" y="6" width="1" height="1"/><rect x="6" y="6" width="1" height="1"/><rect x="0" y="8" width="1" height="1"/><rect x="4" y="8" width="1" height="1"/><rect x="8" y="8" width="1" height="1"/><rect x="2" y="10" width="1" height="1"/><rect x="6" y="10" width="1" height="1"/><rect x="0" y="12" width="1" height="1"/><rect x="4" y="12" width="1" height="1"/><rect x="8" y="12" width="1" height="1"/><rect x="2" y="14" width="1" height="1"/><rect x="6" y="14" width="1" height="1"/><rect x="0" y="16" width="1" height="1"/><rect x="4" y="16" width="1" height="1"/><rect x="8" y="16" width="1" height="1"/><rect x="2" y="18" width="1" height="1"/><rect x="6" y="18" width="1" height="1"/><rect x="0" y="20" width="1" height="1"/><rect x="4" y="20" width="1" height="1"/><rect x="8" y="20" width="1" height="1"/><rect x="2" y="22" width="1" height="1"/><rect x="6" y="22" width="1" height="1"/><rect x="0" y="24" width="1" height="1"/><rect x="4" y="24" width="1" height="1"/><rect x="8" y="24" width="1" height="1"/><rect x="2" y="26" width="1" height="1"/><rect x="6" y="26" width="1" height="1"/><rect x="0" y="28" width="1" height="1"/><rect x="4" y="28" width="1" height="1"/><rect x="8" y="28" width="1" height="1"/><rect x="2" y="30" width="1" height="1"/><rect x="6" y="30" width="1" height="1"/></g>
 </svg>
 <div class="a sbb" style="left:777px;top:416px;width:14px;height:15px"><svg class="a" style="left:2px;top:4px" width="9" height="5"><path d="M0 0L4.5 4.5L9 0z" fill="#000"/></svg></div>
 <div class="a" style="left:776px;top:431px;width:15px;height:15px;background:#dcdcdc;border-top:1px solid #707070;border-left:1px solid #707070"></div>
 <div class="a sbb" style="left:174px;top:432px;width:15px;height:14px"><svg class="a" style="left:4px;top:2px" width="5" height="9"><path d="M4.5 0L0 4.5L4.5 9z" fill="#000"/></svg></div>
 <div class="a" style="left:189px;top:432px;width:587px;height:14px;background:#dcdcdc"></div>
 <div class="a hthumb" style="left:189px;top:432px;width:460px;height:14px"></div>
 <svg class="a" style="left:404px;top:434px" width="31" height="10">
  <g fill="#3a4e88"><rect x="1" y="1" width="1" height="1"/><rect x="5" y="1" width="1" height="1"/><rect x="9" y="1" width="1" height="1"/><rect x="13" y="1" width="1" height="1"/><rect x="17" y="1" width="1" height="1"/><rect x="21" y="1" width="1" height="1"/><rect x="25" y="1" width="1" height="1"/><rect x="29" y="1" width="1" height="1"/><rect x="3" y="3" width="1" height="1"/><rect x="7" y="3" width="1" height="1"/><rect x="11" y="3" width="1" height="1"/><rect x="15" y="3" width="1" height="1"/><rect x="19" y="3" width="1" height="1"/><rect x="23" y="3" width="1" height="1"/><rect x="27" y="3" width="1" height="1"/><rect x="31" y="3" width="1" height="1"/><rect x="1" y="5" width="1" height="1"/><rect x="5" y="5" width="1" height="1"/><rect x="9" y="5" width="1" height="1"/><rect x="13" y="5" width="1" height="1"/><rect x="17" y="5" width="1" height="1"/><rect x="21" y="5" width="1" height="1"/><rect x="25" y="5" width="1" height="1"/><rect x="29" y="5" width="1" height="1"/><rect x="3" y="7" width="1" height="1"/><rect x="7" y="7" width="1" height="1"/><rect x="11" y="7" width="1" height="1"/><rect x="15" y="7" width="1" height="1"/><rect x="19" y="7" width="1" height="1"/><rect x="23" y="7" width="1" height="1"/><rect x="27" y="7" width="1" height="1"/><rect x="31" y="7" width="1" height="1"/><rect x="1" y="9" width="1" height="1"/><rect x="5" y="9" width="1" height="1"/><rect x="9" y="9" width="1" height="1"/><rect x="13" y="9" width="1" height="1"/><rect x="17" y="9" width="1" height="1"/><rect x="21" y="9" width="1" height="1"/><rect x="25" y="9" width="1" height="1"/><rect x="29" y="9" width="1" height="1"/></g>
  <g fill="#d0dcf8"><rect x="0" y="0" width="1" height="1"/><rect x="4" y="0" width="1" height="1"/><rect x="8" y="0" width="1" height="1"/><rect x="12" y="0" width="1" height="1"/><rect x="16" y="0" width="1" height="1"/><rect x="20" y="0" width="1" height="1"/><rect x="24" y="0" width="1" height="1"/><rect x="28" y="0" width="1" height="1"/><rect x="2" y="2" width="1" height="1"/><rect x="6" y="2" width="1" height="1"/><rect x="10" y="2" width="1" height="1"/><rect x="14" y="2" width="1" height="1"/><rect x="18" y="2" width="1" height="1"/><rect x="22" y="2" width="1" height="1"/><rect x="26" y="2" width="1" height="1"/><rect x="30" y="2" width="1" height="1"/><rect x="0" y="4" width="1" height="1"/><rect x="4" y="4" width="1" height="1"/><rect x="8" y="4" width="1" height="1"/><rect x="12" y="4" width="1" height="1"/><rect x="16" y="4" width="1" height="1"/><rect x="20" y="4" width="1" height="1"/><rect x="24" y="4" width="1" height="1"/><rect x="28" y="4" width="1" height="1"/><rect x="2" y="6" width="1" height="1"/><rect x="6" y="6" width="1" height="1"/><rect x="10" y="6" width="1" height="1"/><rect x="14" y="6" width="1" height="1"/><rect x="18" y="6" width="1" height="1"/><rect x="22" y="6" width="1" height="1"/><rect x="26" y="6" width="1" height="1"/><rect x="30" y="6" width="1" height="1"/><rect x="0" y="8" width="1" height="1"/><rect x="4" y="8" width="1" height="1"/><rect x="8" y="8" width="1" height="1"/><rect x="12" y="8" width="1" height="1"/><rect x="16" y="8" width="1" height="1"/><rect x="20" y="8" width="1" height="1"/><rect x="24" y="8" width="1" height="1"/><rect x="28" y="8" width="1" height="1"/></g>
 </svg>
 <div class="a sbb" style="left:761px;top:432px;width:15px;height:14px;border-right-color:#707070"><svg class="a" style="left:5px;top:2px" width="5" height="9"><path d="M0 0L4.5 4.5L0 9z" fill="#000"/></svg></div>
 <!-- description -->
 <div class="a" style="left:139px;top:453px;width:653px;height:62px;border:1px solid #707070;background:#fff;padding:2px 0 0 2px;line-height:14px;white-space:pre;letter-spacing:-0.05px">The target A/F Ratio used when Octane (loggable item) indicates highest octane fuel.  A value of 255 for Octane will use the
OpenLoopMaxOct table exclusively.  A value of 0 will use the OpenLoopMinOct table exclusively.  Values between these two extremes
interpolate between the min and max.  By far, most people will find that they run with a very high Octane rating and can generally
ignore the min octane table, or just set it equal to the max.</div>
 <div class="btn" style="left:139px;top:528px;width:86px">Copy all to ECU</div>
 <div class="btn" style="left:231px;top:528px;width:86px">Reset all</div>
 <div class="btn" style="left:614px;top:528px;width:86px">Copy to ECU</div>
 <div class="btn" style="left:706px;top:528px;width:86px">Reset</div>
 <!-- status -->
 <div class="a" style="left:4px;top:558px;width:797px;height:1px;background:#707070"></div>
 <div class="a" style="left:4px;top:559px;width:797px;height:16px;background:#dcdcdc"></div>
 <div class="a" style="left:635px;top:559px;width:150px;height:16px;background:#dcdcdc;border-top:2px solid #aca899;border-left:2px solid #aca899;border-bottom:1px solid #fff"></div>
 <div class="a" style="left:785px;top:559px;width:16px;height:16px;background:#fff;border-top:2px solid #aca899;border-left:2px solid #aca899"></div>
 <div class="a" style="left:787px;top:561px;width:12px;height:12px;background:linear-gradient(135deg,#a8f0a8,#30c030 50%,#009000)"></div>
 <svg class="a" style="left:591px;top:531px" width="16" height="17" viewBox="0 0 16 17">
  <path d="M7.5 1.5C4 1.5 1.5 4 1.5 7.5C1.5 10.3 3 12 4.8 12.8L3.5 15.5L7.5 13.5C11.5 13.5 13.5 11 13.5 7.5C13.5 4 11 1.5 7.5 1.5z" fill="#f8f4a0" stroke="#50506a"/>
  <text x="7.5" y="11.8" text-anchor="middle" font-family="Liberation Sans" font-weight="bold" font-size="11" fill="#000">?</text>
 </svg>
</div>
</body></html>
